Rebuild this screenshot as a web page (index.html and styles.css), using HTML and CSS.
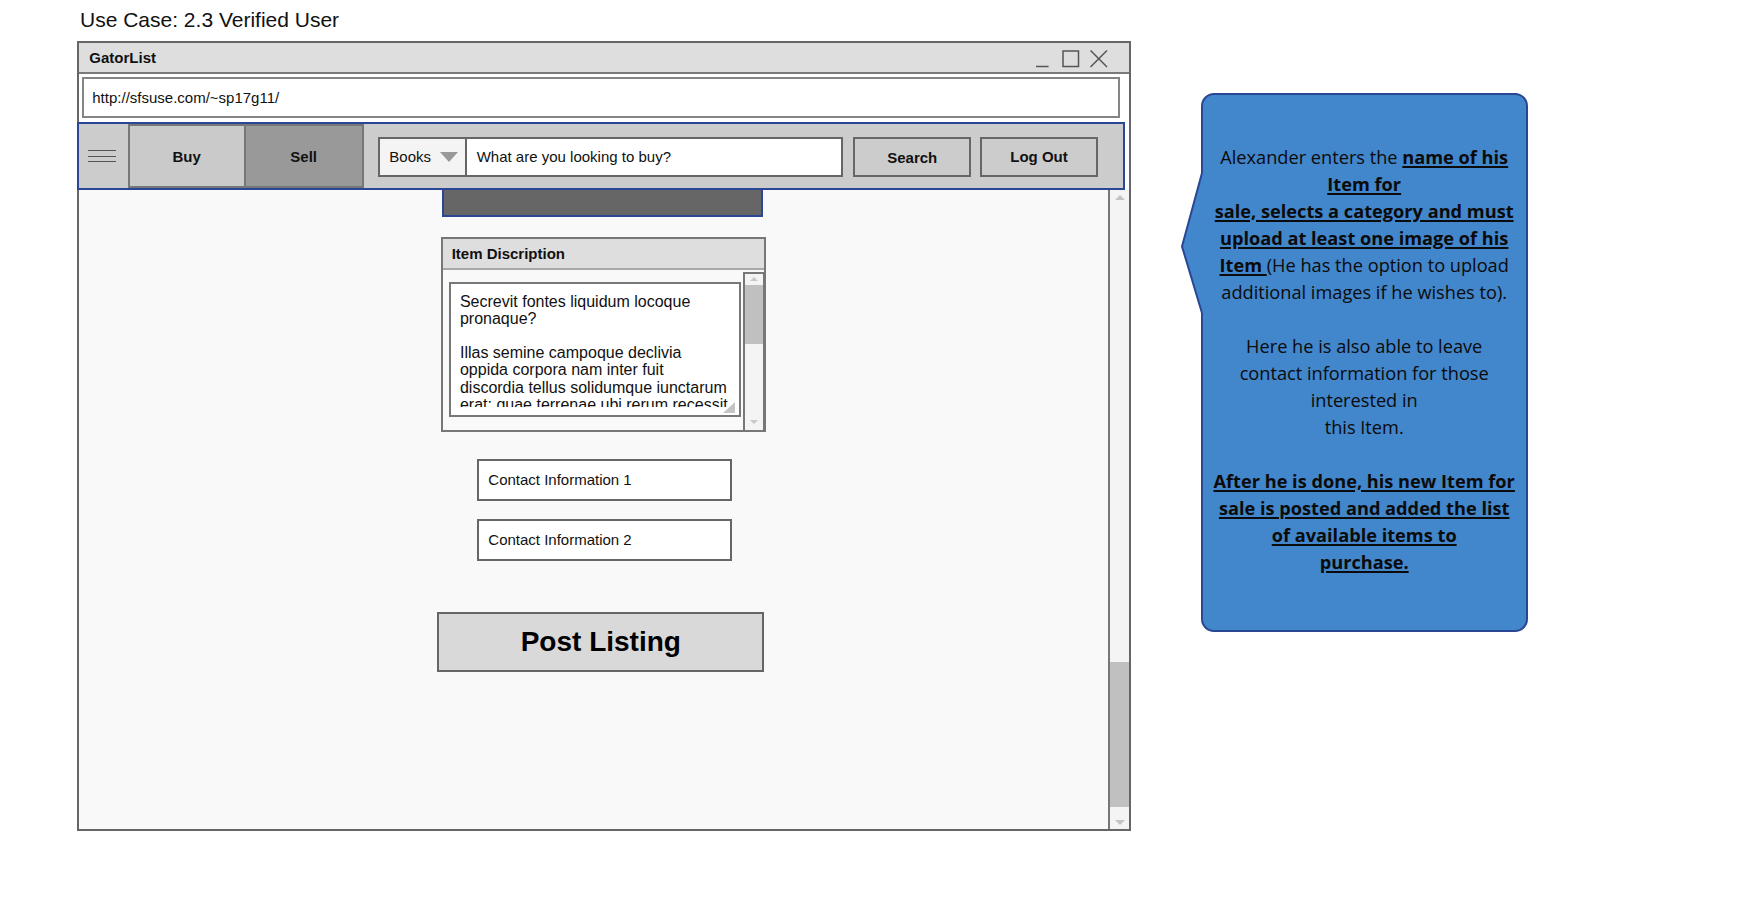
FILE: index.html
```html
<!DOCTYPE html>
<html lang="en">
<head>
<meta charset="utf-8">
<title>Use Case: 2.3 Verified User</title>
<link rel="stylesheet" href="styles.css">
</head>
<body>
<div class="page">
  <div class="left">
    <div class="usecase">Use Case: 2.3 Verified User</div>
    <div class="window">
      <div class="titlebar">
        <span class="app-name">GatorList</span>
        <svg class="win-controls" width="72" height="18" viewBox="0 0 72 18">
          <line x1="0" y1="16.5" x2="12.6" y2="16.5"/>
          <rect x="27" y="1" width="15.5" height="15.5"/>
          <line x1="54.5" y1="0.5" x2="71" y2="17"/>
          <line x1="71" y1="0.5" x2="54.5" y2="17"/>
        </svg>
      </div>
      <div class="urlbar">http://sfsuse.com/~sp17g11/</div>
      <div class="nav">
        <div class="menu"><span></span><span></span><span></span></div>
        <div class="tab tab-buy">Buy</div>
        <div class="tab tab-sell">Sell</div>
        <div class="search">
          <div class="category">Books<span class="caret"></span></div>
          <div class="query">What are you looking to buy?</div>
        </div>
        <div class="btn btn-search">Search</div>
        <div class="btn btn-logout">Log Out</div>
      </div>
      <div class="body">
        <div class="content">
          <div class="dark-bar"></div>
          <div class="panel">
            <div class="panel-head">Item Discription</div>
            <div class="panel-body">
              <div class="textarea">
                <div class="textarea-text">
                  <p>Secrevit fontes liquidum locoque pronaque?</p>
                  <p>Illas semine campoque declivia oppida corpora nam inter fuit discordia tellus solidumque iunctarum erat: quae terrenae ubi rerum recessit pondere, ipsa.</p>
                </div>
                <span class="grip"></span>
              </div>
              <div class="vscroll small">
                <span class="arrow-up"></span>
                <div class="thumb"></div>
                <span class="arrow-down"></span>
              </div>
            </div>
          </div>
          <div class="field field-1">Contact Information 1</div>
          <div class="field field-2">Contact Information 2</div>
          <div class="post">Post Listing</div>
        </div>
        <div class="vscroll main">
          <span class="arrow-up"></span>
          <div class="thumb"></div>
          <span class="arrow-down"></span>
        </div>
      </div>
    </div>
  </div>
  <div class="callout">
    <svg class="pointer" width="27" height="140" viewBox="0 0 27 140">
      <polygon class="pointer-fill" points="22,0 2,73.4 22,140 27,140 27,0"/>
      <polyline class="pointer-line" points="22,0 2,73.4 22,140"/>
    </svg>
    <div class="callout-text">
      Alexander enters the <b><u>name of his</u></b><br>
      <b><u>Item for</u></b><br>
      <b><u>sale, selects a category and must</u></b><br>
      <b><u>upload at least one image of his</u></b><br>
      <b><u>Item&nbsp;</u></b>(He has the option to upload<br>
      additional images if he wishes to).<br>
      <br>
      Here he is also able to leave<br>
      contact information for those<br>
      interested in<br>
      this Item.<br>
      <br>
      <b><u>After he is done, his new Item for</u></b><br>
      <b><u>sale is posted and added the list</u></b><br>
      <b><u>of available items to</u></b><br>
      <b><u>purchase.</u></b>
    </div>
  </div>
</div>
</body>
</html>
```

FILE: styles.css
```css
* { box-sizing: border-box; }

body {
  margin: 0;
  background: #ffffff;
  font-family: "Liberation Sans", Arial, sans-serif;
  color: #000;
}

.page {
  display: flex;
  align-items: flex-start;
  padding: 8px 0 0 77px;
}

.usecase {
  font-size: 21px;
  line-height: 24px;
  padding-left: 3px;
  color: #111;
}

.window {
  margin-top: 9px;
  width: 1054px;
  height: 790px;
  border: 2px solid #666;
  background: #fff;
  display: flex;
  flex-direction: column;
}

.titlebar {
  height: 31px;
  flex: none;
  background: #dedede;
  border-bottom: 2px solid #7a7a7a;
  display: flex;
  align-items: center;
  padding: 0 21.3px 0 10.3px;
}

.app-name {
  font-size: 15px;
  font-weight: bold;
  color: #111;
}

.win-controls {
  margin-left: auto;
  margin-top: 2px;
  fill: none;
  stroke: #555;
  stroke-width: 1.5;
}

.urlbar {
  flex: none;
  margin: 3px 9px 0 2.7px;
  height: 41px;
  border: 2px solid #858585;
  padding-left: 8.6px;
  display: flex;
  align-items: center;
  font-size: 15px;
  color: #111;
  background: #fff;
}

.nav {
  flex: none;
  margin: 4px 4px 0 -2.3px;
  height: 68px;
  border: 2px solid #2a4793;
  background: #cccccc;
  display: flex;
  align-items: stretch;
}

.menu {
  width: 49px;
  flex: none;
  display: flex;
  flex-direction: column;
  justify-content: center;
  gap: 4.8px;
  padding-left: 9.6px;
}

.menu span {
  display: block;
  width: 28px;
  height: 1px;
  background: #555;
}

.tab {
  flex: none;
  border: 2px solid #777;
  display: flex;
  align-items: center;
  justify-content: center;
  font-size: 15px;
  font-weight: bold;
  color: #111;
}

.tab-buy { width: 118px; background: #cacaca; }
.tab-sell { width: 120px; margin-left: -2px; background: #999999; }

.search {
  display: flex;
  align-self: flex-start;
  margin: 12.7px 0 0 14.6px;
  height: 40.6px;
}

.category {
  width: 88.4px;
  border: 2px solid #666;
  background: #f4f4f4;
  padding-left: 9px;
  display: flex;
  align-items: center;
  font-size: 15px;
  color: #111;
}

.caret {
  width: 0;
  height: 0;
  margin-left: 9px;
  margin-top: 1px;
  border-left: 9px solid transparent;
  border-right: 9px solid transparent;
  border-top: 10px solid #999;
}

.query {
  width: 378.3px;
  margin-left: -2px;
  border: 2px solid #666;
  background: #fff;
  padding-left: 10px;
  display: flex;
  align-items: center;
  font-size: 15px;
  color: #111;
}

.btn {
  align-self: flex-start;
  margin-top: 12.7px;
  width: 118.5px;
  height: 40.6px;
  border: 2px solid #666;
  background: #cccccc;
  display: flex;
  align-items: center;
  justify-content: center;
  font-size: 15px;
  font-weight: bold;
  color: #111;
}

.btn-search { margin-left: 10px; padding-top: 2px; }
.btn-logout { margin-left: 8.3px; }

.body {
  flex: 1;
  min-height: 0;
  display: flex;
}

.content {
  flex: 1;
  background: #f9f9f9;
  display: flex;
  flex-direction: column;
  align-items: center;
  padding-left: 18px;
}

.dark-bar {
  width: 321.6px;
  height: 27px;
  flex: none;
  background: #666;
  border: 2px solid #2a4793;
  border-top: none;
}

.panel {
  margin-top: 19.7px;
  margin-left: 1.6px;
  width: 325.3px;
  height: 195px;
  border: 2px solid #777;
  background: #f9f9f9;
  display: flex;
  flex-direction: column;
}

.panel-head {
  height: 31.6px;
  flex: none;
  background: #dedede;
  border-bottom: 2px solid #a8a8a8;
  padding-left: 9px;
  display: flex;
  align-items: center;
  font-size: 15px;
  font-weight: bold;
  color: #111;
}

.panel-body {
  flex: 1;
  display: flex;
  align-items: flex-start;
  padding: 12px 0 0 6.3px;
}

.textarea {
  position: relative;
  width: 291.7px;
  height: 135px;
  border: 2px solid #777;
  background: #fff;
  padding: 8.4px 10px 8px 9px;
}

.textarea-text {
  height: 100%;
  overflow: hidden;
  font-size: 16px;
  line-height: 17.2px;
  color: #111;
}

.textarea-text p { margin: 0 0 17.2px; }

.grip {
  position: absolute;
  right: 3.7px;
  bottom: 2.6px;
  width: 0;
  height: 0;
  border-left: 12px solid transparent;
  border-bottom: 11px solid #c4c4c4;
}

.vscroll {
  display: flex;
  flex-direction: column;
  align-items: center;
  background: #f4f4f4;
}

.vscroll .thumb {
  width: 100%;
  background: #c0c0c0;
  flex: none;
}

.vscroll.small {
  width: 21.7px;
  height: 160px;
  margin: -10.6px -1px 0 2.6px;
  border: 2px solid #777;
}

.small .arrow-up {
  margin-top: 3px;
  border-left: 4.5px solid transparent;
  border-right: 4.5px solid transparent;
  border-bottom: 4px solid #c8c8c8;
}

.small .thumb {
  margin-top: 4.3px;
  height: 59.3px;
}

.small .arrow-down {
  margin-top: auto;
  margin-bottom: 5.7px;
  border-left: 4.5px solid transparent;
  border-right: 4.5px solid transparent;
  border-top: 4px solid #c8c8c8;
}

.vscroll.main {
  width: 21px;
  flex: none;
  border-left: 2px solid #777;
}

.main .arrow-up {
  margin-top: 5px;
  border-left: 5.5px solid transparent;
  border-right: 5.5px solid transparent;
  border-bottom: 5px solid #c4c4c4;
}

.main .thumb {
  margin-top: auto;
  height: 145px;
}

.main .arrow-down {
  margin-top: 13.3px;
  margin-bottom: 4px;
  border-left: 5.5px solid transparent;
  border-right: 5.5px solid transparent;
  border-top: 5px solid #c4c4c4;
}

.field {
  width: 255px;
  height: 41.4px;
  flex: none;
  margin-left: 4.6px;
  border: 2px solid #666;
  background: #fff;
  padding-left: 9px;
  display: flex;
  align-items: center;
  font-size: 15px;
  color: #111;
}

.field-1 { margin-top: 27.6px; }
.field-2 { margin-top: 18.6px; }

.post {
  margin-top: 51.6px;
  margin-left: -3.4px;
  width: 327px;
  height: 60px;
  flex: none;
  border: 2px solid #666;
  background: #d9d9d9;
  display: flex;
  align-items: center;
  justify-content: center;
  font-size: 28px;
  font-weight: bold;
  color: #000;
}

.callout {
  position: relative;
  margin: 84.7px 0 0 69.7px;
  width: 327px;
  height: 539px;
  border: 2px solid #2a4793;
  border-radius: 13px;
  background: #4286cc;
  display: flex;
  align-items: center;
  justify-content: center;
}

.pointer {
  position: absolute;
  left: -23px;
  top: 78.6px;
}

.pointer-fill { fill: #4286cc; }
.pointer-line { fill: none; stroke: #2a4793; stroke-width: 2; }

.callout-text {
  font-family: "Open Sans", "Noto Sans", sans-serif;
  font-size: 18.2px;
  line-height: 27px;
  padding-bottom: 5px;
  text-align: center;
  white-space: nowrap;
  color: #0b0b0b;
}

.callout-text u { text-decoration-thickness: 1.5px; text-underline-offset: 2px; }
```
